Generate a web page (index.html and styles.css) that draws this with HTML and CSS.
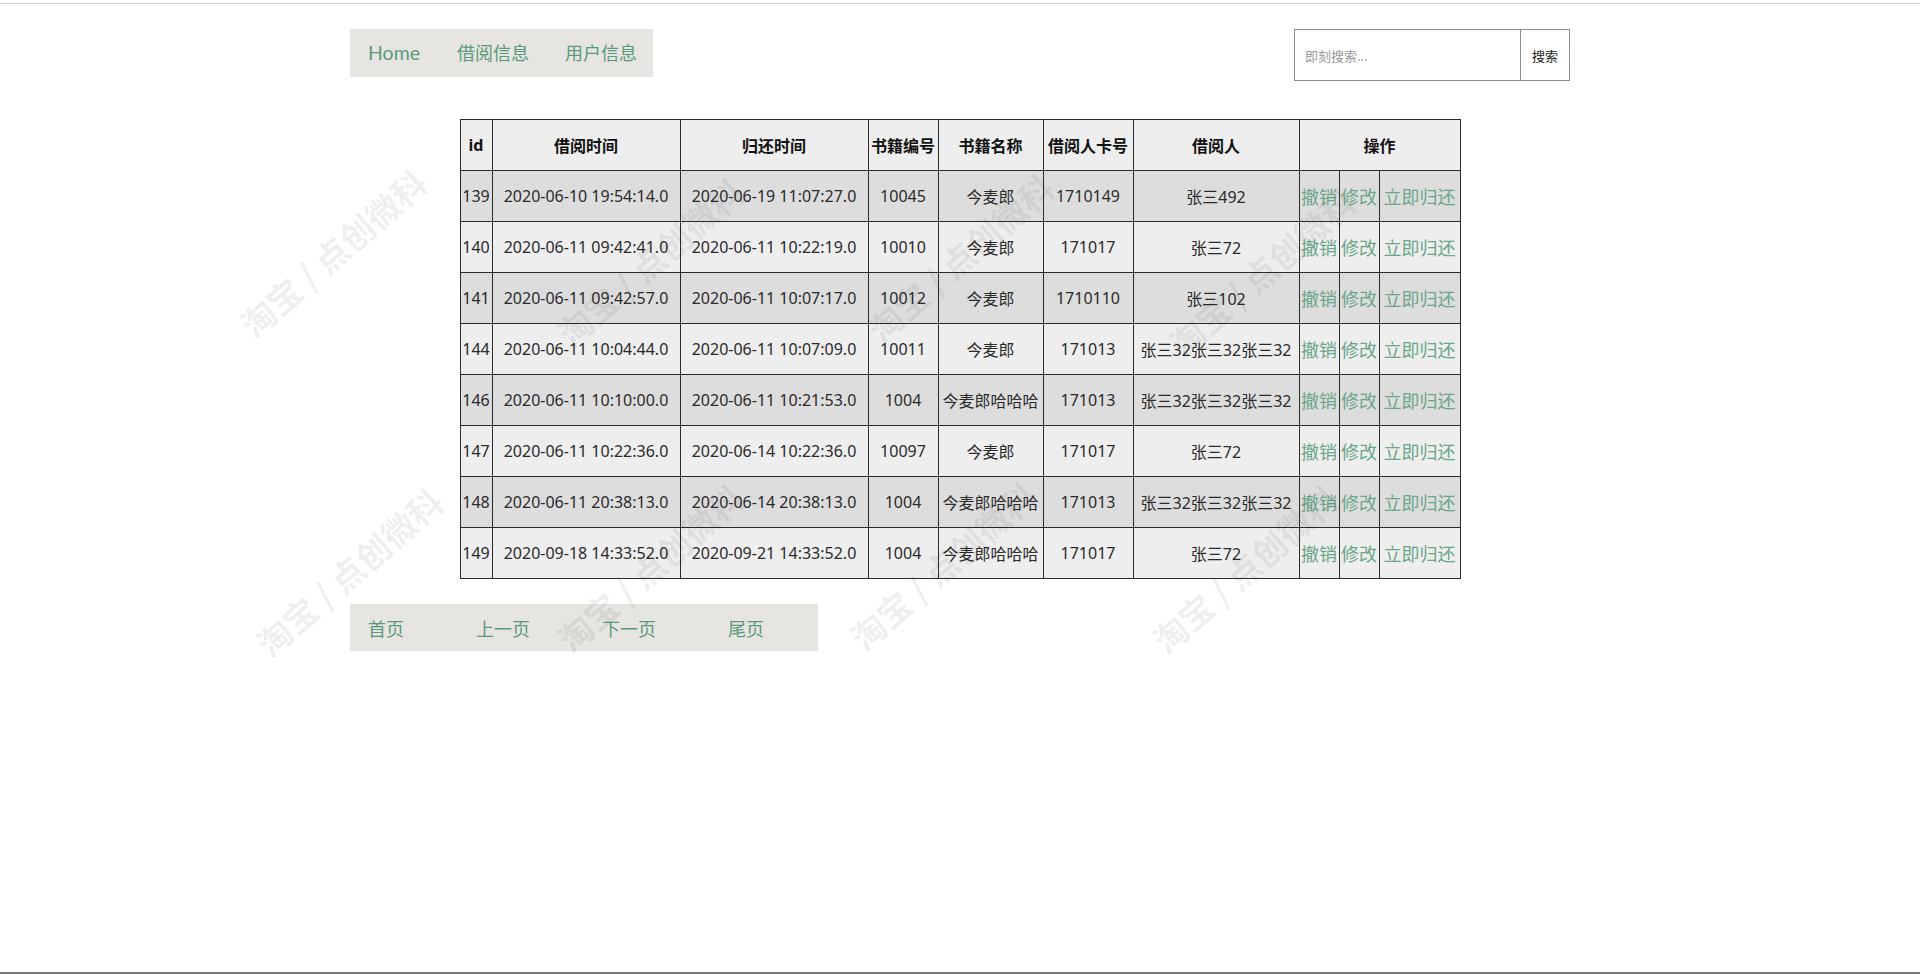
FILE: index.html
```html
<!DOCTYPE html>
<html lang="zh-CN">
<head>
<meta charset="utf-8">
<title>借阅信息</title>
<link rel="stylesheet" href="styles.css">
</head>
<body>
<div class="topline"></div>
<div class="page">
  <header class="header">
    <nav class="nav">
      <a class="nav-item nav-home" href="#">Home</a>
      <a class="nav-item" href="#">借阅信息</a>
      <a class="nav-item nav-last" href="#">用户信息</a>
    </nav>
    <form class="search">
      <input class="search-input" type="text" placeholder="即刻搜索...">
      <button class="search-btn" type="button">搜索</button>
    </form>
  </header>

  <table class="grid">
    <colgroup>
      <col class="c-id"><col class="c-time"><col class="c-time"><col class="c-bno"><col class="c-bname"><col class="c-card"><col class="c-person"><col class="c-a1"><col class="c-a2"><col class="c-a3">
    </colgroup>
    <thead>
      <tr><th>id</th><th>借阅时间</th><th>归还时间</th><th>书籍编号</th><th>书籍名称</th><th>借阅人卡号</th><th>借阅人</th><th colspan="3">操作</th></tr>
    </thead>
    <tbody>
      <tr class="odd"><td>139</td><td>2020-06-10 19:54:14.0</td><td>2020-06-19 11:07:27.0</td><td>10045</td><td>今麦郎</td><td>1710149</td><td>张三492</td><td><a class="act" href="#">撤销</a></td><td><a class="act" href="#">修改</a></td><td><a class="act" href="#">立即归还</a></td></tr>
      <tr class="even"><td>140</td><td>2020-06-11 09:42:41.0</td><td>2020-06-11 10:22:19.0</td><td>10010</td><td>今麦郎</td><td>171017</td><td>张三72</td><td><a class="act" href="#">撤销</a></td><td><a class="act" href="#">修改</a></td><td><a class="act" href="#">立即归还</a></td></tr>
      <tr class="odd"><td>141</td><td>2020-06-11 09:42:57.0</td><td>2020-06-11 10:07:17.0</td><td>10012</td><td>今麦郎</td><td>1710110</td><td>张三102</td><td><a class="act" href="#">撤销</a></td><td><a class="act" href="#">修改</a></td><td><a class="act" href="#">立即归还</a></td></tr>
      <tr class="even"><td>144</td><td>2020-06-11 10:04:44.0</td><td>2020-06-11 10:07:09.0</td><td>10011</td><td>今麦郎</td><td>171013</td><td>张三32张三32张三32</td><td><a class="act" href="#">撤销</a></td><td><a class="act" href="#">修改</a></td><td><a class="act" href="#">立即归还</a></td></tr>
      <tr class="odd"><td>146</td><td>2020-06-11 10:10:00.0</td><td>2020-06-11 10:21:53.0</td><td>1004</td><td>今麦郎哈哈哈</td><td>171013</td><td>张三32张三32张三32</td><td><a class="act" href="#">撤销</a></td><td><a class="act" href="#">修改</a></td><td><a class="act" href="#">立即归还</a></td></tr>
      <tr class="even"><td>147</td><td>2020-06-11 10:22:36.0</td><td>2020-06-14 10:22:36.0</td><td>10097</td><td>今麦郎</td><td>171017</td><td>张三72</td><td><a class="act" href="#">撤销</a></td><td><a class="act" href="#">修改</a></td><td><a class="act" href="#">立即归还</a></td></tr>
      <tr class="odd"><td>148</td><td>2020-06-11 20:38:13.0</td><td>2020-06-14 20:38:13.0</td><td>1004</td><td>今麦郎哈哈哈</td><td>171013</td><td>张三32张三32张三32</td><td><a class="act" href="#">撤销</a></td><td><a class="act" href="#">修改</a></td><td><a class="act" href="#">立即归还</a></td></tr>
      <tr class="even"><td>149</td><td>2020-09-18 14:33:52.0</td><td>2020-09-21 14:33:52.0</td><td>1004</td><td>今麦郎哈哈哈</td><td>171017</td><td>张三72</td><td><a class="act" href="#">撤销</a></td><td><a class="act" href="#">修改</a></td><td><a class="act" href="#">立即归还</a></td></tr>
    </tbody>
  </table>

  <nav class="pager">
    <a class="pg" href="#">首页</a>
    <a class="pg" href="#">上一页</a>
    <a class="pg" href="#">下一页</a>
    <a class="pg" href="#">尾页</a>
  </nav>
</div>

<div class="watermarks" aria-hidden="true">
  <span class="wm wm1">淘宝 / 点创微科</span>
  <span class="wm wm2">淘宝 / 点创微科</span>
  <span class="wm wm3">淘宝 / 点创微科</span>
  <span class="wm wm4">淘宝 / 点创微科</span>
  <span class="wm wm5">淘宝 / 点创微科</span>
  <span class="wm wm6">淘宝 / 点创微科</span>
  <span class="wm wm7">淘宝 / 点创微科</span>
  <span class="wm wm8">淘宝 / 点创微科</span>
</div>
<div class="bottomline"></div>
</body>
</html>
```

FILE: styles.css
```css
html, body {
  margin: 0;
  padding: 0;
  background: #ffffff;
}

body {
  font-family: "Noto Sans", "Noto Sans CJK SC", sans-serif;
  color: #333;
  position: relative;
  min-height: 974px;
  overflow: hidden;
}

a { text-decoration: none; }

.topline {
  height: 1px;
  margin-top: 3px;
  background: #d6cfd2;
}

.page {
  width: 1220px;
  margin: 0 auto;
  padding-top: 25px;
}

.header {
  display: flex;
  justify-content: space-between;
  align-items: flex-start;
}

.nav {
  display: flex;
  align-items: center;
  height: 48px;
  background: #e6e5e1;
}

.nav-item {
  font-family: "Lato", "Noto Sans CJK SC", sans-serif;
  font-size: 18px;
  color: #5a9a7a;
  padding: 0 18px;
  line-height: 48px;
}

.nav-home {
  font-size: 19.5px;
  padding-right: 19px;
}

.nav-last { padding-right: 16px; }

.search {
  display: flex;
  margin: 0;
  height: 52px;
}

.search-input {
  box-sizing: border-box;
  width: 226px;
  height: 52px;
  border: 1px solid #8c8c8c;
  border-right: none;
  padding: 0 10px;
  font-family: "Noto Sans CJK SC", sans-serif;
  font-size: 13px;
  color: #333;
  outline: none;
  margin: 0;
}

.search-input::placeholder { color: #999; }

.search-btn {
  box-sizing: border-box;
  width: 50px;
  height: 52px;
  border: 1px solid #8c8c8c;
  background: #fff;
  font-family: "Noto Sans CJK SC", sans-serif;
  font-size: 13px;
  color: #222;
  margin: 0;
  padding: 0;
}

.grid {
  width: 1000px;
  margin: 38px auto 0;
  border-collapse: collapse;
  table-layout: fixed;
  font-size: 16px;
}

.c-id { width: 32px; }
.c-time { width: 188px; }
.c-bno { width: 70px; }
.c-bname { width: 105px; }
.c-card { width: 90px; }
.c-person { width: 166px; }
.c-a1 { width: 40px; }
.c-a2 { width: 40px; }
.c-a3 { width: 81px; }

.grid th,
.grid td {
  border: 1px solid #2a2a2a;
  height: 48px;
  padding: 1px;
  text-align: center;
  white-space: nowrap;
  overflow: hidden;
}

.grid th {
  background: #eeeeee;
  font-weight: bold;
  color: #111;
}

.grid tr.odd td { background: #dddddd; }
.grid tr.even td { background: #eeeeee; }

.grid td { color: #2a2a2a; }

.act {
  font-size: 18px;
  color: #6aa688;
}

.pager {
  display: flex;
  align-items: center;
  width: 468px;
  height: 47px;
  margin-top: 25px;
  background: #e6e5e1;
}

.pg {
  font-family: "Noto Sans CJK SC", sans-serif;
  font-size: 18px;
  color: #5a9a7a;
  padding: 0 18px;
  margin-right: 36px;
}

.watermarks {
  position: absolute;
  inset: 0;
  pointer-events: none;
}

.wm {
  position: absolute;
  width: 340px;
  margin-left: -170px;
  margin-top: -22px;
  text-align: center;
  font-family: "Noto Sans CJK SC", sans-serif;
  font-weight: bold;
  font-size: 34px;
  line-height: 44px;
  white-space: nowrap;
  color: rgba(0, 0, 0, 0.075);
  transform: rotate(-41deg);
}

.wm1 { left: 333px; top: 253px; }
.wm2 { left: 650px; top: 262px; }
.wm3 { left: 960px; top: 258px; }
.wm4 { left: 1262px; top: 272px; }
.wm5 { left: 349px; top: 572px; }
.wm6 { left: 650px; top: 568px; }
.wm7 { left: 943px; top: 566px; }
.wm8 { left: 1245px; top: 569px; }

.bottomline {
  position: absolute;
  left: 0;
  right: 0;
  bottom: 0;
  height: 2px;
  background: #777;
}
```
